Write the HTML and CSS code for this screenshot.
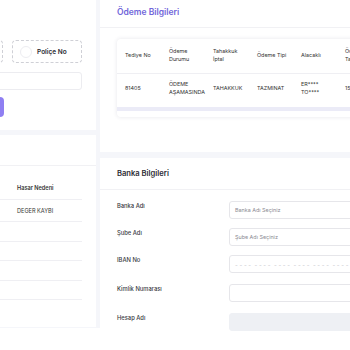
FILE: index.html
```html
<!DOCTYPE html>
<html lang="tr">
<head>
<meta charset="utf-8">
<link rel="stylesheet" href="styles.css">
</head>
<body>
<div class="page">
  <div class="col-left">
    <div class="card card-search">
      <div class="options">
        <div class="option"><span class="radio"></span></div>
        <div class="option"><span class="radio"></span><span class="opt-label">Poliçe No</span></div>
      </div>
      <div class="input input-search"></div>
      <div class="btn-row"><div class="btn"></div></div>
    </div>
    <div class="card card-list">
      <div class="list-head"></div>
      <div class="ltable">
        <div class="lrow lrow-head"><span class="lcell">Hasar Nedeni</span></div>
        <div class="lrow lrow-data"><span class="lcell">DEGER KAYBI</span></div>
        <div class="lrow lrow-empty"></div>
        <div class="lrow lrow-empty"></div>
        <div class="lrow lrow-empty"></div>
        <div class="lrow lrow-empty"></div>
      </div>
    </div>
  </div>
  <div class="col-right">
    <div class="card card-pay">
      <div class="card-title title-purple">Ödeme Bilgileri</div>
      <div class="table-card">
        <div class="trow thead">
          <div class="tc">Tediye No</div>
          <div class="tc">Ödeme<br>Durumu</div>
          <div class="tc">Tahakkuk<br>İptal</div>
          <div class="tc">Ödeme Tipi</div>
          <div class="tc">Alacaklı</div>
          <div class="tc">Ödeme<br>Tarihi</div>
        </div>
        <div class="trow tbody">
          <div class="tc">81405</div>
          <div class="tc">ÖDEME<br>AŞAMASINDA</div>
          <div class="tc">TAHAKKUK</div>
          <div class="tc">TAZMINAT</div>
          <div class="tc">ER****<br>TO****</div>
          <div class="tc">15/06/2023</div>
        </div>
        <div class="scrollbar"></div>
      </div>
    </div>
    <div class="card card-bank">
      <div class="card-title title-dark">Banka Bilgileri</div>
      <div class="form">
        <div class="frow"><span class="flabel">Banka Adı</span><div class="input field"><span class="ph">Banka Adı Seçiniz</span></div></div>
        <div class="frow"><span class="flabel">Şube Adı</span><div class="input field"><span class="ph">Şube Adı Seçiniz</span></div></div>
        <div class="frow"><span class="flabel">IBAN No</span><div class="input field"><span class="mask">- - - - &nbsp;- - - - &nbsp;- - - - &nbsp;- - - - &nbsp;- - - - &nbsp;- - - -</span></div></div>
        <div class="frow frow-wide"><span class="flabel">Kimlik Numarası</span><div class="input field"></div></div>
        <div class="frow frow-wide"><span class="flabel">Hesap Adı</span><div class="input field field-disabled"></div></div>
      </div>
    </div>
  </div>
</div>
</body>
</html>
```
FILE: styles.css
```css
html, body {
  margin: 0;
  padding: 0;
  background: #ffffff;
  overflow: hidden;
  width: 350px;
  height: 350px;
}
body {
  font-family: Inter, "Open Sans", "Liberation Sans", sans-serif;
  color: #333;
}
.page {
  display: flex;
  gap: 4px;
  margin-left: -204px;
  width: 710px;
  height: 328px;
  background: #f5f6fa;
  align-items: flex-start;
}
.col-left {
  width: 300px;
  flex: none;
  display: flex;
  flex-direction: column;
  gap: 5px;
}
.col-right {
  width: 406px;
  flex: none;
  display: flex;
  flex-direction: column;
  gap: 6px;
}
.card {
  background: #fff;
  box-sizing: border-box;
}
/* left top card */
.card-search {
  height: 130px;
  padding: 40px 14px 0 14px;
}
.options {
  display: flex;
  justify-content: flex-end;
  gap: 9px;
}
.option {
  width: 70px;
  height: 23px;
  box-sizing: border-box;
  border: 1px dashed #cfd0d6;
  border-radius: 4px;
  display: flex;
  align-items: center;
  padding-left: 7px;
  gap: 5px;
}
.radio {
  width: 12px;
  height: 12px;
  box-sizing: border-box;
  border-radius: 50%;
  border: 1px solid #ededf1;
  flex: none;
}
.opt-label {
  font-size: 6.5px;
  font-weight: 600;
  color: #2b2b33;
}
.input {
  box-sizing: border-box;
  border: 1px solid #ececf0;
  border-radius: 3px;
  background: #fff;
}
.input-search {
  margin-top: 9px;
  height: 18px;
}
.btn-row {
  display: flex;
  justify-content: flex-end;
  padding-right: 78px;
  margin-top: 7px;
}
.btn {
  width: 70px;
  height: 20px;
  border-radius: 4px;
  background: #8f7ff2;
}
/* left list card */
.card-list {
  height: 192px;
}
.list-head {
  height: 30px;
  border-bottom: 1px solid #f1f1f4;
}
.ltable {
  margin-right: 14px;
}
.lrow {
  border-bottom: 1px solid #efeff3;
  box-sizing: border-box;
  display: flex;
  padding-left: 221px;
}
.lrow-head {
  height: 34px;
  align-items: flex-end;
  padding-bottom: 8px;
}
.lrow-data {
  height: 22px;
  align-items: center;
}
.lrow-empty {
  height: 19.5px;
}
.lcell {
  font-size: 5.6px;
  color: #333;
}
.lrow-head .lcell {
  font-weight: 600;
}
/* right cards */
.card-pay {
  height: 152px;
  padding: 0 0 0 17px;
}
.card-title {
  display: flex;
  align-items: center;
  box-sizing: border-box;
  border-bottom: 1px solid #f1f1f4;
  margin-left: -17px;
  padding-left: 17px;
}
.title-purple {
  height: 28px;
  padding-bottom: 4px;
  font-size: 8.5px;
  font-weight: 600;
  color: #7166da;
}
.table-card {
  margin-top: 11px;
  height: 78px;
  background: #fff;
  border-radius: 4px;
  box-shadow: 0 0 4px rgba(40, 40, 80, 0.12);
  display: flex;
  flex-direction: column;
  overflow: hidden;
}
.trow {
  display: flex;
  padding-left: 8px;
  box-sizing: border-box;
}
.thead {
  height: 35px;
  align-items: center;
  padding-bottom: 3px;
  border-bottom: 1px solid #efeff3;
}
.tbody {
  height: 33px;
  align-items: center;
  padding-bottom: 5px;
}
.tc {
  width: 44px;
  flex: none;
  font-size: 5.4px;
  line-height: 8px;
  color: #333;
}
.scrollbar {
  height: 4px;
  background: #ebebf7;
}
.card-bank {
  height: 170px;
  padding: 0 0 0 17px;
}
.title-dark {
  height: 32px;
  font-size: 7.6px;
  font-weight: 600;
  color: #2c2c34;
}
.form {
  margin-top: 11px;
  display: flex;
  flex-direction: column;
  gap: 9px;
}
.frow {
  display: flex;
  align-items: flex-start;
}
.frow-wide {
  margin-top: 2px;
}
.flabel {
  width: 112px;
  flex: none;
  font-size: 5.8px;
  line-height: 10px;
  font-weight: 500;
  color: #3a3a42;
}
.field {
  width: 200px;
  height: 18px;
  display: flex;
  align-items: center;
  padding-left: 5px;
  border-color: #e6e6ea;
}
.ph {
  font-size: 5.4px;
  color: #8a8a92;
}
.mask {
  font-size: 6px;
  color: #c8c8ce;
  white-space: nowrap;
}
.field-disabled {
  background: #eef0f4;
  border-color: #eef0f4;
}
```
